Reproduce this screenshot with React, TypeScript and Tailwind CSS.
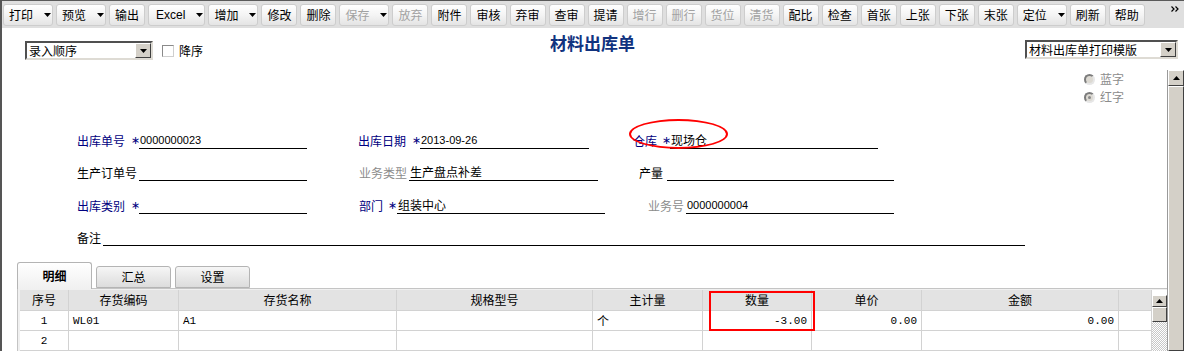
import React from 'react';

type Tool = { t: string; arrow?: boolean; off?: boolean; wide?: boolean };

const tools: Tool[] = [
  { t: '打印', arrow: true },
  { t: '预览', arrow: true },
  { t: '输出' },
  { t: 'Excel', arrow: true, wide: true },
  { t: '增加', arrow: true },
  { t: '修改' },
  { t: '删除' },
  { t: '保存', arrow: true, off: true },
  { t: '放弃', off: true },
  { t: '附件' },
  { t: '审核' },
  { t: '弃审' },
  { t: '查审' },
  { t: '提请' },
  { t: '增行', off: true },
  { t: '删行', off: true },
  { t: '货位', off: true },
  { t: '清货', off: true },
  { t: '配比' },
  { t: '检查' },
  { t: '首张' },
  { t: '上张' },
  { t: '下张' },
  { t: '末张' },
  { t: '定位', arrow: true },
  { t: '刷新' },
  { t: '帮助' },
];

const DownTri = () => (
  <svg width="7" height="4" viewBox="0 0 7 4" className="shrink-0">
    <polygon points="0,0 7,0 3.5,4" fill="#000" />
  </svg>
);

const UpTri = () => (
  <svg width="7" height="4" viewBox="0 0 7 4">
    <polygon points="0,4 7,4 3.5,0" fill="#000" />
  </svg>
);

function ToolButton({ t, arrow, off, wide }: Tool) {
  return (
    <div
      className={`h-[22px] flex items-center shrink-0 rounded-[3px] border border-[#cdcdcd] bg-linear-to-b from-[#ffffff] via-[#f4f4f4] to-[#e4e4e4] leading-[14px] ${
        arrow ? (wide ? 'pl-[7px]' : 'pl-[5px]') : 'px-[5px]'
      } ${off ? 'text-[#a2a2a2]' : 'text-black'} ${t === 'Excel' ? "font-['Liberation_Sans',sans-serif]" : ''}`}
    >
      <span>{t}</span>
      {arrow && (
        <span className="ml-[11px] mr-[1px] flex items-center">
          <DownTri />
        </span>
      )}
    </div>
  );
}

function Select({ text, w }: { text: string; w: string }) {
  return (
    <div
      className={`${w} h-[19px] flex items-stretch bg-white border-2 border-t-[#505050] border-l-[#505050] border-r-[#dedbd4] border-b-[#dedbd4]`}
    >
      <div className="flex-1 pl-[2px] leading-[15px] text-black whitespace-nowrap overflow-hidden">{text}</div>
      <div className="w-[16px] flex items-center justify-center bg-[#d4d0c8] border border-t-white border-l-white border-r-[#404040] border-b-[#404040]">
        <DownTri />
      </div>
    </div>
  );
}

function Radio({ label, on }: { label: string; on?: boolean }) {
  return (
    <div className="h-[18px] flex items-center gap-[5px] text-[#8c8c8c]">
      <div className="w-[11px] h-[11px] rounded-full bg-[#dcd9d2] border-2 border-t-[#7c7c7c] border-l-[#7c7c7c] border-r-[#e6e6e6] border-b-[#e6e6e6] flex items-center justify-center">
        {on && <div className="w-[3px] h-[3px] rounded-full bg-[#8a8a8a]" />}
      </div>
      <span className="leading-[14px]">{label}</span>
    </div>
  );
}

const navy = 'text-[#000080]';
const star = "w-[8px] shrink-0 leading-[16px] text-[#000080] font-['DejaVu_Sans',sans-serif] text-[11px]";
const val = "font-['Liberation_Sans',sans-serif] text-[11px]";

const cols = [
  { h: '序号', w: 'w-[49px]' },
  { h: '存货编码', w: 'w-[110px]' },
  { h: '存货名称', w: 'w-[218px]' },
  { h: '规格型号', w: 'w-[196px]' },
  { h: '主计量', w: 'w-[110px]' },
  { h: '数量', w: 'w-[109px]' },
  { h: '单价', w: 'w-[110px]' },
  { h: '金额', w: 'w-[197px]' },
  { h: '', w: 'w-[33px]' },
];

const rows: { v: string; right?: boolean; center?: boolean }[][] = [
  [
    { v: '1', center: true },
    { v: 'WL01' },
    { v: 'A1' },
    { v: '' },
    { v: '个' },
    { v: '-3.00', right: true },
    { v: '0.00', right: true },
    { v: '0.00', right: true },
    { v: '' },
  ],
  [{ v: '2', center: true }, { v: '' }, { v: '' }, { v: '' }, { v: '' }, { v: '' }, { v: '' }, { v: '' }, { v: '' }],
];

export default function App() {
  return (
    <div className="relative w-[1184px] h-[351px] overflow-hidden bg-white border-l-2 border-[#555555] text-[12px] text-black font-['Noto_Sans_CJK_SC','Noto_Sans',sans-serif]">
      {/* toolbar */}
      <div className="h-[28px] flex items-center gap-[3px] pl-[1px] bg-[#dfdfdf] border-t border-[#5a5a5a]">
        {tools.map((b) => (
          <ToolButton key={b.t} {...b} />
        ))}
        <svg width="9" height="6" viewBox="0 0 9 6" className="ml-auto mr-[4px] self-start mt-[5px]">
          <path d="M0.5 0.5 L3 3 L0.5 5.5 M4.5 0.5 L7 3 L4.5 5.5" stroke="#000" strokeWidth="1.2" fill="none" />
        </svg>
      </div>

      {/* header line */}
      <div className="h-[42px] flex items-start">
        <div className="w-[548px] shrink-0 pl-[23px] pt-[13px] flex items-center">
          <Select text="录入顺序" w="w-[128px]" />
          <div className="ml-[9px] w-[12px] h-[12px] bg-white border border-t-[#8a8a8a] border-l-[#8a8a8a] border-r-[#cfcfcf] border-b-[#cfcfcf]" />
          <span className="ml-[5px] leading-[14px]">降序</span>
        </div>
        <div className="pt-[5px] text-[17px] leading-[20px] font-bold text-[#11337f]">材料出库单</div>
        <div className="ml-auto mt-[12px] mr-[6px]">
          <Select text="材料出库单打印模版" w="w-[153px]" />
        </div>
      </div>

      {/* scroll area */}
      <div className="h-[281px] flex">
        <div className="flex-1 min-w-0 flex flex-col">
          <div className="h-[47px] shrink-0 flex justify-end pr-[43px]">
            <div className="flex flex-col">
              <Radio label="蓝字" />
              <Radio label="红字" on />
            </div>
          </div>

          {/* row 1 */}
          <div className="h-[32px] shrink-0 flex items-end pl-[75px]">
            <span className={`w-[54px] leading-[16px] ${navy}`}>出库单号</span>
            <span className={star}>∗</span>
            <div className={`w-[168px] h-[16px] border-b border-black leading-[14px] pl-[1px] ${val}`}>0000000023</div>
            <span className={`ml-[51px] w-[54px] leading-[16px] ${navy}`}>出库日期</span>
            <span className={star}>∗</span>
            <div className={`w-[169px] h-[16px] border-b border-black leading-[14px] pl-[1px] ${val}`}>2013-09-26</div>
            <span className={`ml-[44px] w-[29px] leading-[16px] ${navy}`}>仓库</span>
            <span className={star}>∗</span>
            <div className="w-[208px] h-[16px] border-b border-black leading-[14px] pl-[1px]">现场仓</div>
          </div>

          {/* row 2 */}
          <div className="h-[32px] shrink-0 flex items-end pl-[75px]">
            <span className="w-[62px] leading-[16px]">生产订单号</span>
            <div className="w-[168px] h-[16px] border-b border-black" />
            <span className="ml-[52px] w-[50px] leading-[16px] text-[#8c8c8c]">业务类型</span>
            <div className="w-[189px] h-[16px] border-b border-black leading-[14px] pl-[1px]">生产盘点补差</div>
            <span className="ml-[41px] w-[28px] leading-[16px]">产量</span>
            <div className="w-[227px] h-[16px] border-b border-black" />
          </div>

          {/* row 3 */}
          <div className="h-[33px] shrink-0 flex items-end pl-[75px]">
            <span className={`w-[54px] leading-[16px] ${navy}`}>出库类别</span>
            <span className={star}>∗</span>
            <div className="w-[168px] h-[16px] border-b border-black" />
            <span className={`ml-[52px] w-[29px] leading-[16px] ${navy}`}>部门</span>
            <span className={`${star} w-[9px]`}>∗</span>
            <div className="w-[208px] h-[16px] border-b border-black leading-[14px] pl-[1px]">组装中心</div>
            <span className="ml-[43px] w-[38px] leading-[16px] text-[#8c8c8c]">业务号</span>
            <div className={`w-[208px] h-[16px] border-b border-black leading-[14px] pl-[1px] ${val}`}>0000000004</div>
          </div>

          {/* row 4 */}
          <div className="h-[32px] shrink-0 flex items-end pl-[75px]">
            <span className="w-[26px] leading-[16px]">备注</span>
            <div className="w-[922px] h-[16px] border-b border-black" />
          </div>

          {/* tabs + grid */}
          <div className="mt-[16px] ml-[15px] flex flex-col">
            <div className="h-[26px] flex items-end gap-[4px]">
              <div className="relative z-10 -mb-px w-[75px] h-[27px] flex items-center justify-center rounded-t-[3px] border border-b-0 border-[#b4b4b4] bg-linear-to-b from-[#ffffff] to-[#f0f0f0] font-bold">
                明细
              </div>
              <div className="w-[75px] h-[22px] flex items-center justify-center rounded-t-[3px] border border-[#b4b4b4] bg-linear-to-b from-[#f6f6f6] to-[#dcdcdc]">
                汇总
              </div>
              <div className="w-[75px] h-[22px] flex items-center justify-center rounded-t-[3px] border border-[#b4b4b4] bg-linear-to-b from-[#f6f6f6] to-[#dcdcdc]">
                设置
              </div>
            </div>
            <div className="flex border-t border-l border-[#c4c4c4] bg-[#f0f0f0] pt-[1px] pl-[2px]">
              <div className="flex flex-col">
                <div className="flex h-[21px] bg-[#e3e3e3]">
                  {cols.map((c, i) => (
                    <div
                      key={i}
                      className={`${c.w} shrink-0 border-r border-b border-[#d2d2d2] flex items-center justify-center leading-[14px]`}
                    >
                      {c.h}
                    </div>
                  ))}
                </div>
                {rows.map((r, ri) => (
                  <div key={ri} className="flex h-[20px] bg-white">
                    {r.map((c, ci) => (
                      <div
                        key={ci}
                        className={`${cols[ci].w} shrink-0 border-r border-b border-[#d2d2d2] flex items-center px-[4px] leading-[14px] ${
                          c.right ? 'justify-end' : c.center ? 'justify-center' : 'justify-start'
                        } ${c.v === '个' ? '' : "font-['Liberation_Mono',monospace] text-[11px]"}`}
                      >
                        {c.v}
                      </div>
                    ))}
                  </div>
                ))}
              </div>
              {/* grid scrollbar */}
              <div className="w-[15px] shrink-0 flex flex-col bg-white pt-[5px]">
                <div className="h-[12px] flex items-center justify-center bg-[#d4d0c8] border border-t-white border-l-white border-r-[#404040] border-b-[#404040]">
                  <UpTri />
                </div>
                <div className="h-[15px] bg-[#d4d0c8] border border-t-white border-l-white border-r-[#404040] border-b-[#404040]" />
                <div className="flex-1 bg-[repeating-conic-gradient(#c8c8c8_0_25%,#ffffff_0_50%)] bg-[length:2px_2px]" />
              </div>
            </div>
          </div>
        </div>

        {/* outer scrollbar */}
        <div className="w-[17px] shrink-0 flex flex-col bg-[#d4d0c8] border-l border-[#9a9a9a]">
          <div className="h-[16px] flex items-center justify-center bg-[#d4d0c8] border border-t-white border-l-white border-r-[#404040] border-b-[#404040]">
            <UpTri />
          </div>
          <div className="flex-1 bg-[#d4d0c8] border border-t-white border-l-white border-r-[#404040] border-b-[#404040]" />
        </div>
      </div>

      {/* red annotations */}
      <div className="absolute left-[627px] top-[119px] w-[99px] h-[30px] rounded-[50%] border-2 border-[#ff0000]" />
      <div className="absolute left-[707px] top-[291px] w-[106px] h-[40px] border-2 border-[#ff0000]" />
    </div>
  );
}
